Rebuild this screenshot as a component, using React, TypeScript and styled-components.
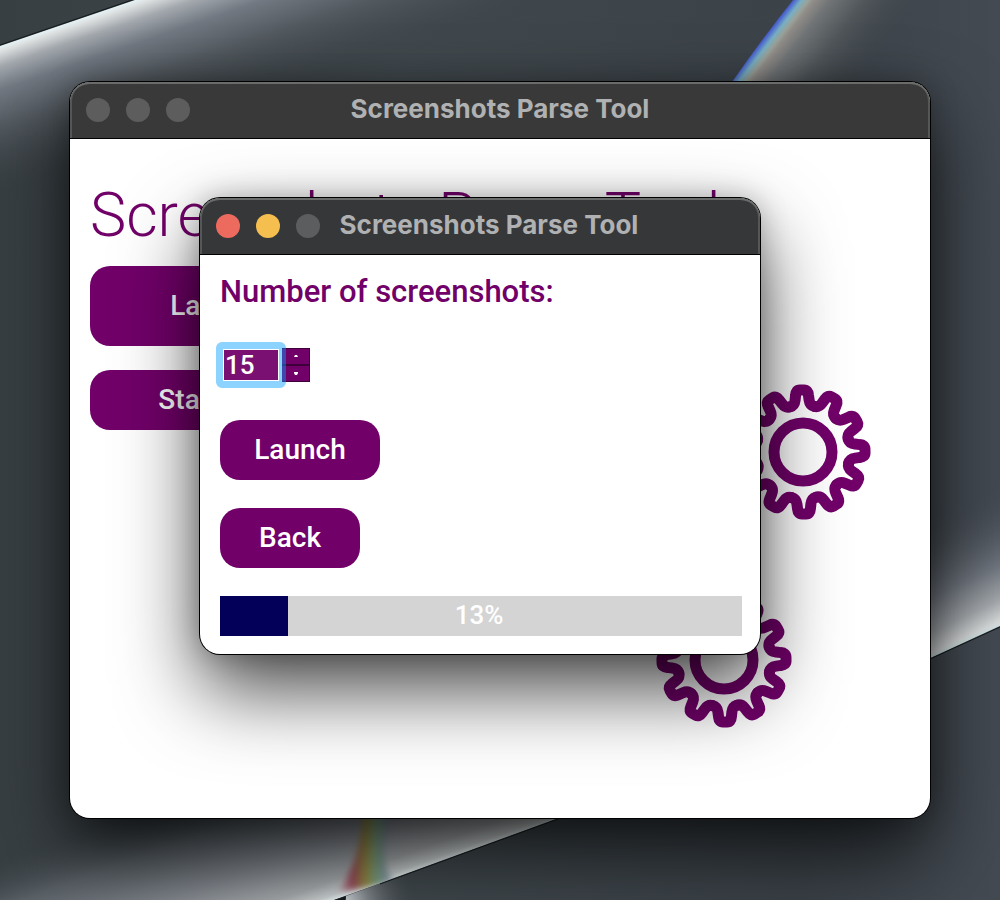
import React, { useState } from "react";
import styled, { createGlobalStyle, css } from "styled-components";

const PURPLE = "#710069";

const GlobalStyle = createGlobalStyle`
  *, *::before, *::after { box-sizing: border-box; }
  body { margin: 0; background: #343b40; font-family: Roboto, "Liberation Sans", sans-serif; }
`;

const Desktop = styled.main`
  position: relative;
  display: flex;
  min-height: 100vh;
  padding: 82px 70px;
  overflow: hidden;
`;

const WallpaperSvg = styled.svg`
  position: absolute;
  inset: 0;
  width: 100%;
  height: 100%;
`;

const windowFrame = css`
  display: flex;
  flex-direction: column;
  border-radius: 20px;
  overflow: hidden;
  background: #fff;
  box-shadow: 0 0 0 1px #000, 0 36px 80px rgba(0, 0, 0, 0.72), 0 0 28px rgba(0, 0, 0, 0.25);
`;

const MainWindow = styled.section`
  ${windowFrame}
  position: relative;
  flex: 1;
  min-height: 736px;
`;

const DialogWindow = styled.section`
  ${windowFrame}
  position: absolute;
  top: 198px;
  left: 20%;
  width: 56%;
`;

const TitleBar = styled.header<{ $tone: string; $inset?: number }>`
  position: relative;
  display: flex;
  flex: none;
  align-items: center;
  justify-content: center;
  height: 57px;
  padding: 0 0 2px ${(p) => p.$inset ?? 0}px;
  border-bottom: 1px solid #000;
  border-radius: 20px 20px 0 0;
  background: ${(p) => p.$tone};
  box-shadow: inset 0 2px 0 #6a6b6b, inset 2px 0 0 #555656, inset -2px 0 0 #555656;
`;

const TitleText = styled.h2`
  margin: 0;
  color: #b0b1b2;
  font: 700 26px/32px Inter, "Liberation Sans", sans-serif;
  white-space: nowrap;
`;

const Lights = styled.div`
  position: absolute;
  top: 16px;
  left: 16px;
  display: flex;
  gap: 16px;
`;

const Light = styled.button<{ $color: string }>`
  width: 24px;
  height: 24px;
  padding: 0;
  border: 0;
  border-radius: 50%;
  background: ${(p) => p.$color};
`;

const MainBody = styled.div`
  padding: 42px 60px 20px 20px;
`;

const Heading = styled.h1`
  margin: 0;
  color: ${PURPLE};
  font-size: 61px;
  font-weight: 300;
  line-height: 68px;
  white-space: nowrap;
`;

const Columns = styled.div`
  display: flex;
  justify-content: space-between;
  padding-top: 17px;
`;

const ButtonColumn = styled.div`
  display: flex;
  flex-direction: column;
  align-items: flex-start;
  gap: 24px;
`;

const ActionButton = styled.button<{ $width: number; $height?: number }>`
  width: ${(p) => p.$width}px;
  height: ${(p) => p.$height ?? 60}px;
  padding: 0;
  border: 0;
  border-radius: 20px;
  background: ${PURPLE};
  color: #fff;
  font: 500 28px/32px Roboto, "Liberation Sans", sans-serif;
`;

const GearDrawing = styled.svg`
  flex: none;
  width: 214px;
  height: 348px;
  margin-top: 117px;
  overflow: visible;
`;

const DialogBody = styled.form`
  display: flex;
  flex-direction: column;
  align-items: flex-start;
  gap: 28px;
  padding: 20px 18px 18px 20px;
`;

const FieldLabel = styled.label`
  color: ${PURPLE};
  font-size: 31px;
  font-weight: 500;
  line-height: 34px;
`;

const Spinner = styled.div`
  display: flex;
  align-items: center;
  height: 55px;
`;

const InputRing = styled.span`
  position: relative;
  display: flex;
  margin: 0 -4px;
  border: 7px solid rgba(0, 157, 255, 0.45);
  border-radius: 6px;
`;

const NumberInput = styled.input`
  width: 56px;
  height: 32px;
  padding: 0 1px;
  border: 1px solid #fff;
  border-radius: 0;
  outline: 0;
  background: #7b1073;
  color: #fff;
  font: 500 26px/30px Roboto, "Liberation Sans", sans-serif;
`;

const StepColumn = styled.div`
  display: flex;
  flex-direction: column;
  width: 28px;
  height: 34px;
`;

const StepButton = styled.button`
  display: flex;
  flex: 1;
  align-items: center;
  justify-content: center;
  padding: 0;
  border: solid #3d0039;
  border-width: 1px 1px 1px 0;
  background: ${PURPLE};
`;

const ProgressTrack = styled.div`
  position: relative;
  width: 100%;
  height: 40px;
  background: #d4d4d4;
`;

const ProgressFill = styled.div`
  height: 100%;
  background: #03005a;
`;

const ProgressText = styled.span`
  position: absolute;
  inset: 0;
  padding-right: 4px;
  color: #fff;
  font-size: 26px;
  font-weight: 500;
  line-height: 38px;
  text-align: center;
`;

const TOOTH =
  "M-12.2 45.4C-8.5 46.4-7.5 48-7 52L-6.4 57Q-6 62-2 62H2Q6 62 6.4 57L7 52C7.5 48 8.5 46.4 12.2 45.4";

function Gear({ x, y }: { x: number; y: number }) {
  return (
    <g transform={`translate(${x} ${y})`} fill="none" stroke={PURPLE} strokeWidth="11" strokeLinecap="round">
      <circle r="29" />
      {Array.from({ length: 12 }, (_, i) => (
        <path key={i} d={TOOTH} transform={`rotate(${i * 30 - 1})`} />
      ))}
    </g>
  );
}

function Wallpaper() {
  return (
    <WallpaperSvg viewBox="0 0 1000 900" preserveAspectRatio="none" aria-hidden="true">
      <defs>
        <linearGradient id="base" x1="0" y1="0" x2="1" y2="0">
          <stop offset="0" stopColor="#383f43" />
          <stop offset="0.4" stopColor="#40484d" />
          <stop offset="0.8" stopColor="#3b4248" />
          <stop offset="1" stopColor="#434a52" />
        </linearGradient>
        <linearGradient id="arc" gradientUnits="userSpaceOnUse" x1="67" y1="23" x2="112" y2="155">
          <stop offset="0" stopColor="#e6f3f6" />
          <stop offset="0.04" stopColor="#dcdfdf" />
          <stop offset="0.14" stopColor="#a3a8ae" />
          <stop offset="0.3" stopColor="#717881" />
          <stop offset="0.55" stopColor="#52595f" />
          <stop offset="1" stopColor="#3c4348" stopOpacity="0" />
        </linearGradient>
        <linearGradient id="prism" gradientUnits="userSpaceOnUse" x1="760" y1="38" x2="847" y2="105">
          <stop offset="0" stopColor="#45399a" />
          <stop offset="0.04" stopColor="#4c68d0" />
          <stop offset="0.09" stopColor="#78afc4" />
          <stop offset="0.14" stopColor="#9aa29a" />
          <stop offset="0.18" stopColor="#908c88" />
          <stop offset="0.3" stopColor="#707476" />
          <stop offset="0.55" stopColor="#50565a" />
          <stop offset="1" stopColor="#3e454a" stopOpacity="0" />
        </linearGradient>
        <linearGradient id="lower" gradientUnits="userSpaceOnUse" x1="445" y1="859" x2="394" y2="718">
          <stop offset="0" stopColor="#e4eeee" />
          <stop offset="0.03" stopColor="#cbd0d1" />
          <stop offset="0.12" stopColor="#a7abad" />
          <stop offset="0.38" stopColor="#81868d" />
          <stop offset="0.7" stopColor="#596066" />
          <stop offset="1" stopColor="#40474c" stopOpacity="0" />
        </linearGradient>
        <linearGradient id="side" gradientUnits="userSpaceOnUse" x1="965" y1="642" x2="911" y2="524">
          <stop offset="0" stopColor="#cfe2e4" />
          <stop offset="0.03" stopColor="#d9dcdc" />
          <stop offset="0.18" stopColor="#a5a9ad" />
          <stop offset="0.42" stopColor="#70767f" />
          <stop offset="1" stopColor="#40474d" stopOpacity="0" />
        </linearGradient>
        <linearGradient id="rainbow" x1="0" y1="0" x2="1" y2="0">
          <stop offset="0" stopColor="#a05566" stopOpacity="0.2" />
          <stop offset="0.25" stopColor="#98465a" />
          <stop offset="0.5" stopColor="#938c40" />
          <stop offset="0.68" stopColor="#7aa080" />
          <stop offset="1" stopColor="#7682a8" stopOpacity="0.6" />
        </linearGradient>
        <radialGradient id="cusp" gradientUnits="userSpaceOnUse" cx="346" cy="900" r="70">
          <stop offset="0" stopColor="#c9cfd2" />
          <stop offset="0.3" stopColor="#83898e" />
          <stop offset="1" stopColor="#40474c" stopOpacity="0" />
        </radialGradient>
        <filter id="soft" x="-20%" y="-20%" width="140%" height="140%">
          <feGaussianBlur stdDeviation="3" />
        </filter>
        <clipPath id="aboveRidge">
          <path d="M0 700H600V803L334 900H0Z" />
        </clipPath>
      </defs>
      <rect width="1000" height="900" fill="url(#base)" />
      <path d="M0 46L135 0H700V300H0Z" fill="url(#arc)" />
      <path d="M0 45L135 -1" stroke="#15191c" strokeWidth="1" />
      <path d="M793 0Q764 36 732 82V200H1000V0Z" fill="url(#prism)" />
      <path d="M0 700H600V803L334 900H0Z" fill="url(#lower)" />
      <g clipPath="url(#aboveRidge)">
        <path d="M364 800C362 846 354 868 338 892L394 882C380 866 384 836 390 800Z" fill="url(#rainbow)" filter="url(#soft)" />
      </g>
      <path d="M346 896L480 847V900H346Z" fill="url(#cusp)" />
      <path d="M558 819L380 884" stroke="#171b1e" />
      <path d="M334 900L346 896L345 900Z" fill="#171b1e" />
      <path d="M900 450H1000V626L900 672Z" fill="url(#side)" />
      <path d="M930 659L1000 627" stroke="#14181b" />
    </WallpaperSvg>
  );
}

export default function App() {
  const [count, setCount] = useState(15);
  const progress = 13;
  return (
    <Desktop>
      <GlobalStyle />
      <Wallpaper />
      <MainWindow aria-label="Screenshots Parse Tool">
        <TitleBar $tone="#383938">
          <Lights>
            <Light type="button" aria-label="Close" $color="#5c5d5c" />
            <Light type="button" aria-label="Minimize" $color="#5c5d5c" />
            <Light type="button" aria-label="Zoom" $color="#5c5d5c" />
          </Lights>
          <TitleText>Screenshots Parse Tool</TitleText>
        </TitleBar>
        <MainBody>
          <Heading>Screenshots Parse Tool</Heading>
          <Columns>
            <ButtonColumn>
              <ActionButton type="button" $width={252} $height={80}>Launch</ActionButton>
              <ActionButton type="button" $width={198}>Start</ActionButton>
            </ButtonColumn>
            <GearDrawing viewBox="0 0 214 348" aria-hidden="true">
              <Gear x={147} y={69} />
              <Gear x={68} y={277} />
            </GearDrawing>
          </Columns>
        </MainBody>
      </MainWindow>
      <DialogWindow role="dialog" aria-label="Number of screenshots">
        <TitleBar $tone="#363739" $inset={18}>
          <Lights>
            <Light type="button" aria-label="Close" $color="#ed6a5f" />
            <Light type="button" aria-label="Minimize" $color="#f5bf4f" />
            <Light type="button" aria-label="Zoom" $color="#5c5d5f" />
          </Lights>
          <TitleText>Screenshots Parse Tool</TitleText>
        </TitleBar>
        <DialogBody onSubmit={(e) => e.preventDefault()}>
          <FieldLabel htmlFor="count">Number of screenshots:</FieldLabel>
          <Spinner>
            <InputRing>
              <NumberInput
                id="count"
                inputMode="numeric"
                value={count}
                onChange={(e) => setCount(Number(e.target.value) || 0)}
              />
            </InputRing>
            <StepColumn>
              <StepButton type="button" aria-label="Increase" onClick={() => setCount(count + 1)}>
                <svg width="4" height="3" viewBox="0 0 4 3"><path d="M1 0H3L4 2H0Z" fill="#fff" /></svg>
              </StepButton>
              <StepButton type="button" aria-label="Decrease" onClick={() => setCount(Math.max(0, count - 1))}>
                <svg width="4" height="3" viewBox="0 0 4 3"><path d="M0 0H4V1L3 3H1L0 1Z" fill="#fff" /></svg>
              </StepButton>
            </StepColumn>
          </Spinner>
          <ActionButton type="submit" $width={160}>Launch</ActionButton>
          <ActionButton type="button" $width={140}>Back</ActionButton>
          <ProgressTrack role="progressbar" aria-valuenow={progress} aria-valuemin={0} aria-valuemax={100}>
            <ProgressFill style={{ width: `${progress}%` }} />
            <ProgressText>{progress}%</ProgressText>
          </ProgressTrack>
        </DialogBody>
      </DialogWindow>
    </Desktop>
  );
}
